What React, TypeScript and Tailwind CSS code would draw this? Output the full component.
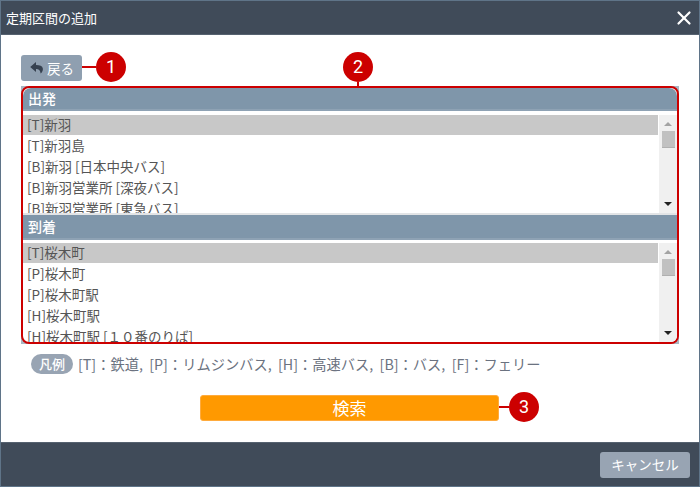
import { X } from "lucide-react";

const FONT = "font-['Noto_Sans_CJK_JP','Noto_Sans',sans-serif]";

const DEPARTURES = [
  "[T]新羽",
  "[T]新羽島",
  "[B]新羽 [日本中央バス]",
  "[B]新羽営業所 [深夜バス]",
  "[B]新羽営業所 [東急バス]",
];

const ARRIVALS = [
  "[T]桜木町",
  "[P]桜木町",
  "[P]桜木町駅",
  "[H]桜木町駅",
  "[H]桜木町駅 [１０番のりば]",
];

function Marker({ n }: { n: number }) {
  return (
    <div className="w-[30px] h-[30px] rounded-full bg-[#cc0000] text-white text-[18px] leading-[30px] text-center font-['Roboto',sans-serif]">
      {n}
    </div>
  );
}

function ScrollBar() {
  return (
    <div className="w-[18px] shrink-0 bg-[#f0f0f0] flex flex-col items-center relative">
      <div className="mt-[7px] w-0 h-0 border-x-[4px] border-x-transparent border-b-[4px] border-b-[#a3a3a3]" />
      <div className="mt-[5px] w-[13px] h-[17px] bg-[#c1c1c1] border-b border-[#b0b0b0]" />
      <div className="mt-auto mb-[7px] w-0 h-0 border-x-[4px] border-x-transparent border-t-[4px] border-t-[#222222]" />
    </div>
  );
}

function StationList({
  title,
  rows,
  first,
}: {
  title: string;
  rows: string[];
  first?: boolean;
}) {
  return (
    <div>
      <div
        className={`bg-[#7f96aa] border-b-2 border-[#8ea2b4] pl-[5px] text-white text-[14px] font-medium ${
          first ? "h-[23px] leading-[20px] rounded-t-[8px]" : "h-[25px] leading-[23px]"
        }`}
      >
        {title}
      </div>
      <div
        className={`flex overflow-hidden ${
          first ? "h-[104px] pt-[4px] border-b-2 border-[#e2e4e6]" : "h-[102px] pt-[3px]"
        }`}
      >
        <div className="flex-1 overflow-hidden">
          {rows.map((row, i) => (
            <div
              key={row}
              className={`h-[20px] mb-[1px] pl-[4px] mr-[1px] text-[13.5px] leading-[19px] text-[#555555] whitespace-nowrap ${
                i === 0 ? "bg-[#c8c8c8]" : ""
              }`}
            >
              {row}
            </div>
          ))}
        </div>
        <ScrollBar />
      </div>
    </div>
  );
}

export default function App() {
  return (
    <div
      className={`${FONT} w-[700px] h-[487px] flex flex-col bg-white border border-[#5f7488] overflow-hidden relative`}
    >
      {/* ヘッダー */}
      <div className="h-[34px] shrink-0 bg-[#404b59] border-b border-[#566270] flex items-center justify-between pl-[5px] pr-[4px]">
        <span className="text-white text-[13px]">定期区間の追加</span>
        <X className="w-[22px] h-[22px] text-white" strokeWidth={2.4} />
      </div>

      {/* 本文 */}
      <div className="flex-1 px-[20px] pt-[20px]">
        <button className="w-[61px] h-[26px] rounded-[3px] bg-[#8f9fb0] text-white text-[13.5px] flex items-center justify-center gap-[2px]">
          <svg viewBox="0 0 16 16" className="w-[16px] h-[16px]">
            <path
              d="M7 2 1.2 7 7 12V9c2.6 0 4.2.9 4.6 4.6 1.9-1.6 2.6-3.4 2.2-5.4C13.3 6 11 5 7 5z"
              fill="#364150"
            />
          </svg>
          戻る
        </button>

        <div className="mt-[5px] w-[658px] bg-[#a9b7c3]">
          <div className="border-2 border-[#cc0000] rounded-[8px] bg-white overflow-hidden">
            <StationList title="出発" rows={DEPARTURES} first />
            <StationList title="到着" rows={ARRIVALS} />
          </div>
        </div>

        <div className="mt-[10px] ml-[10px] flex items-center gap-[5px] text-[14.25px] leading-[20px] text-[#6b7280]">
          <span className="w-[42px] h-[20px] rounded-full bg-[#98a4b3] text-white text-[13px] font-medium leading-[20px] text-center">
            凡例
          </span>
          <span className="whitespace-pre">
            [T]：鉄道,  [P]：リムジンバス,  [H]：高速バス,  [B]：バス,  [F]：フェリー
          </span>
        </div>

        <button className="block mt-[21px] ml-[179px] w-[299px] h-[26px] rounded-[3px] bg-[#ff9900] border border-[#ffab3d] text-white text-[17px] leading-[22px]">
          検索
        </button>
      </div>

      {/* フッター */}
      <div className="h-[44px] shrink-0 bg-[#404b59] border-t border-[#566270] flex items-center justify-end pr-[9px]">
        <button className="w-[90px] h-[26px] rounded-[3px] bg-[#98a4b3] text-white text-[13.5px]">
          キャンセル
        </button>
      </div>

      {/* 注釈マーカー */}
      <div className="absolute left-[81px] top-[51px] flex items-center">
        <div className="w-[14px] h-[2px] bg-[#cc0000]" />
        <Marker n={1} />
      </div>
      <div className="absolute left-[342px] top-[51px] flex flex-col items-center">
        <Marker n={2} />
        <div className="w-[2px] h-[5px] bg-[#cc0000]" />
      </div>
      <div className="absolute left-[498px] top-[391px] flex items-center">
        <div className="w-[10px] h-[2px] bg-[#cc0000]" />
        <Marker n={3} />
      </div>
    </div>
  );
}
